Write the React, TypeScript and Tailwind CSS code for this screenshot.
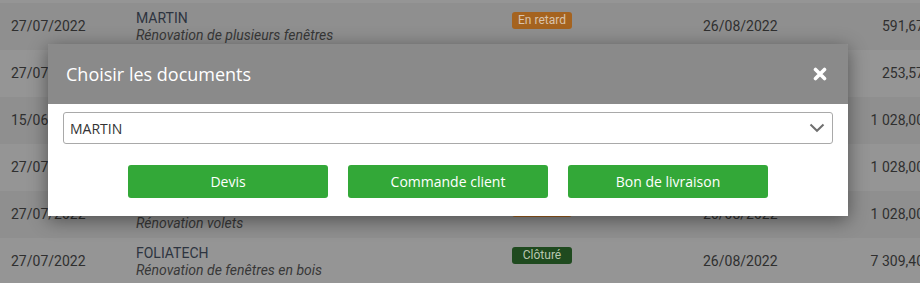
import React from 'react';

type Row = {
  date: string;
  client: string;
  label: string;
  status?: 'late' | 'closed';
  due: string;
  amount: string;
};

const rows: Row[] = [
  { date: '27/07/2022', client: 'MARTIN', label: 'Rénovation de plusieurs fenêtres', status: 'late', due: '26/08/2022', amount: '591,67' },
  { date: '27/07/2022', client: 'DUPONT', label: 'Rénovation porte', due: '26/08/2022', amount: '253,57' },
  { date: '15/06/2022', client: 'BERNARD', label: 'Rénovation volets', due: '15/07/2022', amount: '1 028,00' },
  { date: '27/07/2022', client: 'BERNARD', label: 'Rénovation volets', due: '26/08/2022', amount: '1 028,00' },
  { date: '27/07/2022', client: 'BERNARD', label: 'Rénovation volets', status: 'late', due: '26/08/2022', amount: '1 028,00' },
  { date: '27/07/2022', client: 'FOLIATECH', label: 'Rénovation de fenêtres en bois', status: 'closed', due: '26/08/2022', amount: '7 309,40' },
];

const StatusBadge: React.FC<{ status: Row['status'] }> = ({ status }) => {
  if (status === 'late') {
    return (
      <span className="inline-flex h-[17px] w-[60px] items-center justify-center rounded-[3px] bg-[#a5631f] text-[12px] text-[#d9c3ad]">
        En retard
      </span>
    );
  }
  if (status === 'closed') {
    return (
      <span className="inline-flex h-[17px] w-[60px] items-center justify-center rounded-[3px] bg-[#1f4a1f] text-[12px] text-[#b9c7b0]">
        Clôturé
      </span>
    );
  }
  return null;
};

const ChooseDocumentsModal: React.FC = () => {
  const choices = ['Devis', 'Commande client', 'Bon de livraison'];
  return (
    <div className="absolute left-[48px] top-[44px] w-[800px] shadow-[0_4px_18px_rgba(0,0,0,0.45)] font-['Open_Sans',sans-serif]">
      <div className="flex h-[60px] items-center justify-between rounded-t-[3px] bg-[#8a8a8a] pl-[18px] pr-[21px]">
        <h2 className="text-[18px] text-white">Choisir les documents</h2>
        <button className="text-white">
          <svg width="14" height="14" viewBox="0 0 14 14">
            <path d="M2.5 2.5 L11.5 11.5 M11.5 2.5 L2.5 11.5" stroke="white" strokeWidth="3.6" strokeLinecap="round" />
          </svg>
        </button>
      </div>
      <div className="bg-white px-[15px] pb-[18px] pt-[8px]">
        <div className="flex h-[32px] items-center justify-between rounded-[3px] border border-[#a9a9a9] pl-[6px] pr-[7px]">
          <span className="text-[14px] text-[#333]">MARTIN</span>
          <svg width="16" height="10" viewBox="0 0 16 10">
            <path d="M1.5 1.5 L8 7.8 L14.5 1.5" fill="none" stroke="#6f6f6f" strokeWidth="2" />
          </svg>
        </div>
        <div className="mt-[21px] flex justify-center gap-[20px]">
          {choices.map((c) => (
            <button
              key={c}
              className="flex h-[33px] w-[200px] items-center justify-center rounded-[3px] bg-[#33a838] text-[14px] text-white"
            >
              {c}
            </button>
          ))}
        </div>
      </div>
    </div>
  );
};

export default function App() {
  return (
    <div className="relative h-[283px] w-[920px] overflow-hidden bg-[#939393] font-['Roboto',sans-serif]">
      <div className="h-[3px] bg-[#959595]" />
      {rows.map((r, i) => (
        <div
          key={i}
          className={`flex h-[47px] items-center text-[14px] text-[#2f2f2f] ${i % 2 === 0 ? 'bg-[#8f8f8f]' : 'bg-[#959595]'}`}
        >
          <div className="w-[136px] shrink-0 pl-[11px]">{r.date}</div>
          <div className="w-[376px] shrink-0 leading-[17px]">
            <div className="text-[#2d3440]">{r.client}</div>
            <div className="italic text-[#383838]">{r.label}</div>
          </div>
          <div className="-mt-[14px] w-[191px] shrink-0">
            <StatusBadge status={r.status} />
          </div>
          <div className="w-[115px] shrink-0">{r.due}</div>
          <div className="w-[106px] shrink-0 text-right">{r.amount}</div>
        </div>
      ))}
      <ChooseDocumentsModal />
    </div>
  );
}
